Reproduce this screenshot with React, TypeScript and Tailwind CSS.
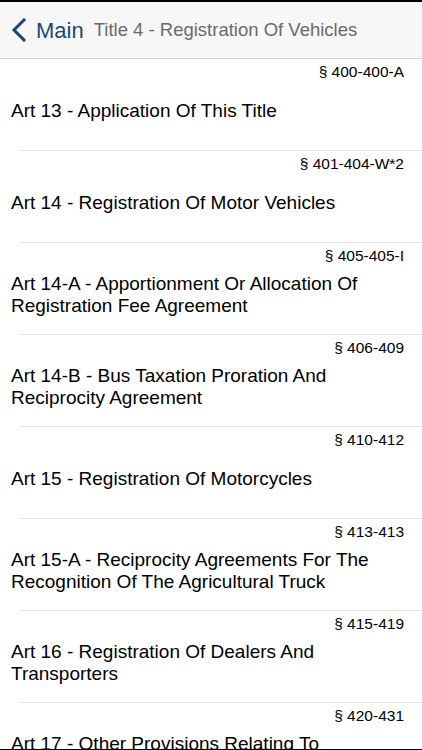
const rows = [
  { sec: "§ 400-400-A", title: "Art 13 - Application Of This Title" },
  { sec: "§ 401-404-W*2", title: "Art 14 - Registration Of Motor Vehicles" },
  { sec: "§ 405-405-I", title: "Art 14-A - Apportionment Or Allocation Of Registration Fee Agreement" },
  { sec: "§ 406-409", title: "Art 14-B - Bus Taxation Proration And Reciprocity Agreement" },
  { sec: "§ 410-412", title: "Art 15 - Registration Of Motorcycles" },
  { sec: "§ 413-413", title: "Art 15-A - Reciprocity Agreements For The Recognition Of The Agricultural Truck" },
  { sec: "§ 415-419", title: "Art 16 - Registration Of Dealers And Transporters" },
  { sec: "§ 420-431", title: "Art 17 - Other Provisions Relating To Motor Vehicles" },
];

function Row({ sec, title }: { sec: string; title: string }) {
  return (
    <div className="shrink-0">
      <div className="h-[91px] flex flex-col">
        <div className="pt-[4px] pr-[18px] text-right text-[15.5px] leading-[18px] text-black">{sec}</div>
        <div className="flex-1 flex items-center pl-[11px] pr-[51px] pb-[9px]">
          <div className="text-[19px] leading-[22px] text-black">{title}</div>
        </div>
      </div>
      <div className="ml-[20px] h-px bg-[#e6e6e6]" />
    </div>
  );
}

export default function App() {
  return (
    <div className="w-[422px] h-[750px] flex flex-col overflow-hidden bg-white font-['Liberation_Sans',Arial,sans-serif]">
      <div className="h-[2px] bg-black shrink-0" />
      <div className="h-[57px] shrink-0 flex items-center bg-[#f7f7f7] border-b border-[#d6d6d6]">
        <svg width="16" height="24" viewBox="0 0 16 24" className="ml-[11px]">
          <path d="M13 2 L3 12 L13 22" fill="none" stroke="#1c4775" strokeWidth="3" strokeLinecap="square" />
        </svg>
        <span className="ml-[9px] text-[22px] text-[#1c4775]">Main</span>
        <span className="ml-[10px] text-[18.5px] text-[#6a6a6a]">Title 4 - Registration Of Vehicles</span>
      </div>
      <div className="flex-1 flex flex-col overflow-hidden">
        {rows.map((r) => (
          <Row key={r.sec} sec={r.sec} title={r.title} />
        ))}
      </div>
      <div className="h-px bg-black shrink-0" />
    </div>
  );
}
